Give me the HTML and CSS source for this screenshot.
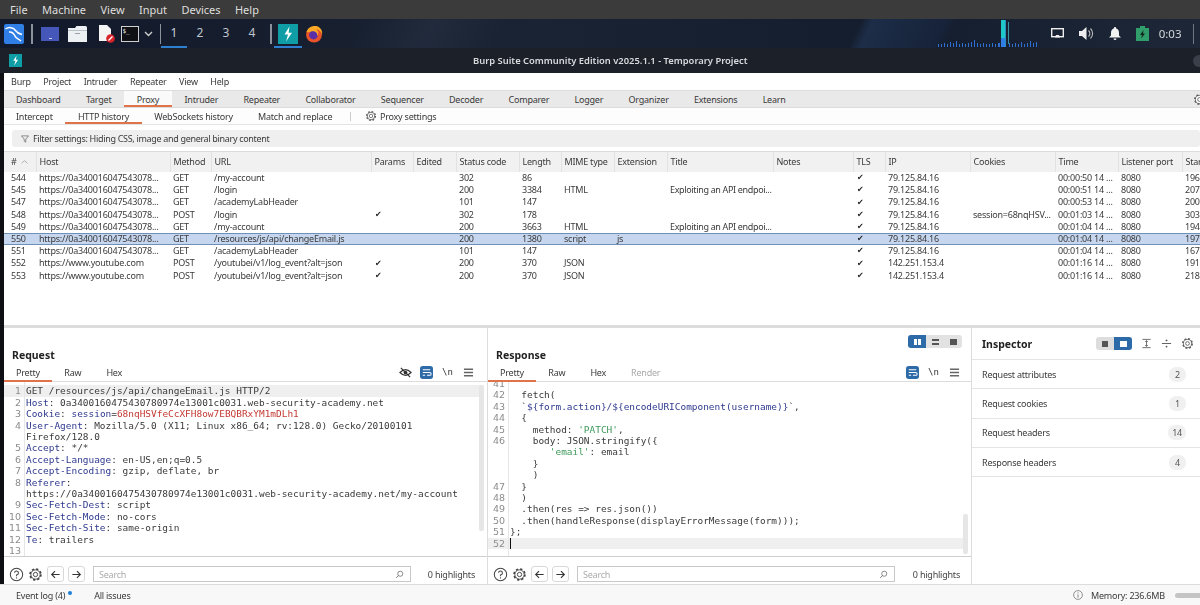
FILE: index.html
```html
<!DOCTYPE html>
<html lang="en">
<head>
<meta charset="utf-8">
<title>Burp Suite Community Edition</title>
<link rel="stylesheet" href="styles.css">
</head>
<body>
<svg class="defs" width="0" height="0" aria-hidden="true">
  <symbol id="gear" viewBox="0 0 16 16">
    <circle cx="8" cy="8" r="5.4" fill="none" stroke="currentColor" stroke-width="2.6" stroke-dasharray="2.2 2.04"/>
    <circle cx="8" cy="8" r="5" fill="#fff" stroke="currentColor" stroke-width="1"/>
    <circle cx="8" cy="8" r="2.3" fill="none" stroke="currentColor" stroke-width="1"/>
  </symbol>
  <symbol id="burp" viewBox="0 0 20 20">
    <rect width="20" height="20" fill="#0f9ea6"/>
    <path d="M11.5 2.5 6.5 10.5H10L8 17.5 14 8.8H10.6Z" fill="#fff"/>
  </symbol>
  <symbol id="wrap" viewBox="0 0 14 14">
    <rect width="14" height="14" rx="3" fill="#2d6aa8"/>
    <path d="M3 4H11M3 7H10.5A1.5 1.5 0 0 1 10.5 10H7.5M3 10H5.5" fill="none" stroke="#fff" stroke-width="1.1"/>
  </symbol>
  <symbol id="menu" viewBox="0 0 10 10">
    <path d="M1.5 2.5H8.5M1.5 5H8.5M1.5 7.5H8.5" stroke="#666" stroke-width="1.2"/>
  </symbol>
  <symbol id="help" viewBox="0 0 16 16">
    <circle cx="8" cy="8" r="6.6" fill="none" stroke="#444" stroke-width="1.1"/>
    <path d="M5.9 6.2A2.1 2.1 0 1 1 8 8.5V9.8" fill="none" stroke="#444" stroke-width="1.1"/>
    <circle cx="8" cy="11.6" r=".7" fill="#444"/>
  </symbol>
  <symbol id="left" viewBox="0 0 12 12">
    <path d="M10.5 6H1.8M5.5 2.2 1.8 6 5.5 9.8" fill="none" stroke="#333" stroke-width="1.2"/>
  </symbol>
  <symbol id="right" viewBox="0 0 12 12">
    <path d="M1.5 6H10.2M6.5 2.2 10.2 6 6.5 9.8" fill="none" stroke="#333" stroke-width="1.2"/>
  </symbol>
  <symbol id="lens" viewBox="0 0 12 12">
    <circle cx="7" cy="5" r="3.4" fill="none" stroke="#666" stroke-width="1"/>
    <path d="M4.6 7.4 1.6 10.6" stroke="#666" stroke-width="1.1"/>
  </symbol>
</svg>

<div class="vmmenu">
  <span>File</span><span>Machine</span><span>View</span><span>Input</span><span>Devices</span><span>Help</span>
</div>

<div class="taskbar">
  <svg class="tb-kali" viewBox="0 0 20 20"><rect width="20" height="20" rx="2" fill="#2f7fe6"/><path d="M1.5 5C5 2.5 9.5 3.5 11.5 6.5 13.5 9.5 15.5 10 18 10.5M5 8C8.5 7.5 10 10 11 12 12 14.5 14.5 14.5 17 17" fill="none" stroke="#fff" stroke-width="1.5"/></svg>
  <i class="tb-sep sep-a"></i>
  <svg class="tb-desk" viewBox="0 0 18 14"><rect width="18" height="14" fill="#4557b8"/><rect x="8" y="11" width="3" height="1" fill="#c5cdf0"/></svg>
  <svg class="tb-folder" viewBox="0 0 19 16"><path d="M0 2H7L8.5 0H17.5Q19 0 19 1.5V16H0Z" fill="#eef1f4"/><rect x="0" y="4" width="19" height="1" fill="#b9c1c9"/><rect x="7" y="7" width="5" height="1" fill="#9aa3ac"/></svg>
  <svg class="tb-doc" viewBox="0 0 17 18"><path d="M1 0H9L13 4V16H1Z" fill="#f4f4f4"/><circle cx="12.5" cy="13.5" r="4.3" fill="#d8232a"/><path d="M10.5 15.5 14.5 11.5" stroke="#fff" stroke-width="1.2"/></svg>
  <div class="tb-term"><span>$_</span></div>
  <svg class="tb-chev" viewBox="0 0 9 6"><path d="M1 1 4.5 4.5 8 1" fill="none" stroke="#ccc" stroke-width="1.4"/></svg>
  <i class="tb-sep sep-b"></i>
  <div class="ws ws-on">1</div><div class="ws">2</div><div class="ws">3</div><div class="ws">4</div>
  <i class="tb-sep sep-c"></i>
  <div class="tb-burp"><svg viewBox="0 0 20 20"><use href="#burp"/></svg></div>
  <svg class="tb-fox" viewBox="0 0 18 18"><circle cx="9" cy="9.5" r="8" fill="#e8532a"/><circle cx="8.5" cy="10" r="4.4" fill="#5a2ea6"/><path d="M1.5 7C3 2.5 7 .5 11 1 15 1.5 18 5.5 17 10 16.5 6.5 14 4.5 11 4.5 14 6 14 9 12 11 13 7 9 5.5 6 6.5 4.5 7 3 7.5 1.5 7Z" fill="#f9a825"/></svg>
  <svg class="tb-spec" viewBox="0 0 114 29">
    <g fill="#2f6fd0">
      <rect x="1" y="25" width="1" height="3"/><rect x="4" y="25" width="1" height="3"/><rect x="7" y="24" width="1" height="4"/><rect x="10" y="25" width="1" height="3"/><rect x="13" y="23" width="1" height="5"/><rect x="16" y="24" width="1" height="4"/><rect x="19" y="22" width="1" height="6"/><rect x="22" y="25" width="1" height="3"/><rect x="25" y="24" width="1" height="4"/><rect x="28" y="25" width="1" height="3"/><rect x="31" y="24" width="1" height="4"/><rect x="34" y="23" width="1" height="5"/><rect x="37" y="21" width="1" height="7"/><rect x="40" y="24" width="1" height="4"/><rect x="43" y="25" width="1" height="3"/><rect x="46" y="24" width="1" height="4"/><rect x="49" y="25" width="1" height="3"/><rect x="52" y="25" width="1" height="3"/><rect x="55" y="24" width="1" height="4"/><rect x="58" y="25" width="1" height="3"/><rect x="61" y="24" width="2" height="4"/><rect x="72" y="24" width="1" height="4"/><rect x="75" y="25" width="1" height="3"/><rect x="78" y="24" width="1" height="4"/><rect x="81" y="25" width="1" height="3"/><rect x="84" y="23" width="1" height="5"/><rect x="87" y="25" width="1" height="3"/><rect x="90" y="24" width="1" height="4"/><rect x="93" y="22" width="1" height="6"/><rect x="96" y="24" width="1" height="4"/><rect x="99" y="23" width="1" height="5"/>
    </g>
    <rect x="64" y="1" width="4" height="18" fill="#1fc8c8"/><rect x="64" y="19" width="4" height="9" fill="#2f7fe6"/><rect x="68" y="1" width="1" height="27" fill="#2a8fc0"/><rect x="71" y="3" width="1" height="22" fill="#3a90a0"/>
  </svg>
  <svg class="tb-disp" viewBox="0 0 13 11"><rect x=".7" y=".7" width="11.6" height="8" fill="none" stroke="#eee" stroke-width="1.4"/><path d="M4 9.5H9L8 7H5Z" fill="#eee"/></svg>
  <svg class="tb-vol" viewBox="0 0 15 13"><path d="M0 4H3L7.5 0V13L3 9H0Z" fill="#eee"/><path d="M9.5 3.5A4 4 0 0 1 9.5 9.5M11.5 1.5A7 7 0 0 1 11.5 11.5" fill="none" stroke="#bbb" stroke-width="1.1"/></svg>
  <svg class="tb-bell" viewBox="0 0 12 13"><path d="M6 0A1 1 0 0 1 7 1.2C9 1.8 10 3.5 10 6V8.5L12 10.5H0L2 8.5V6C2 3.5 3 1.8 5 1.2A1 1 0 0 1 6 0Z" fill="#f2f2f2"/><path d="M4.5 11.5H7.5A1.5 1.5 0 0 1 4.5 11.5Z" fill="#f2f2f2"/></svg>
  <svg class="tb-batt" viewBox="0 0 13 15"><rect x="4" y="0" width="5" height="2" fill="#2f9e6a"/><rect y="2" width="13" height="13" fill="#2f9e6a"/><path d="M7.5 4 4 9H6L5.2 12.5 9 7.5H7Z" fill="#13261d"/></svg>
  <span class="tb-clock">0:03</span>
  <i class="tb-sep sep-d"></i>
</div>

<div class="titlebar">
  <svg class="tt-icon" viewBox="0 0 20 20"><use href="#burp"/></svg>
  <span class="tt-text">Burp Suite Community Edition v2025.1.1 - Temporary Project</span>
  <i class="tt-dot"></i>
</div>

<div class="frame">
  <main class="app">
    <nav class="menubar"><span>Burp</span><span>Project</span><span>Intruder</span><span>Repeater</span><span>View</span><span>Help</span></nav>

    <nav class="tabs">
      <span>Dashboard</span><span>Target</span><span class="on">Proxy</span><span>Intruder</span><span>Repeater</span><span>Collaborator</span><span>Sequencer</span><span>Decoder</span><span>Comparer</span><span>Logger</span><span>Organizer</span><span>Extensions</span><span>Learn</span>
      <svg class="tabs-gear" viewBox="0 0 16 16"><use href="#gear"/></svg>
    </nav>

    <nav class="subtabs">
      <span>Intercept</span><span class="on">HTTP history</span><span>WebSockets history</span><span>Match and replace</span>
      <i class="sub-sep"></i>
      <svg class="sub-gear" viewBox="0 0 16 16"><use href="#gear"/></svg>
      <span class="sub-set">Proxy settings</span>
    </nav>

    <div class="filter">
      <svg viewBox="0 0 9 9"><path d="M.5 1H8.5L5.4 4.6V8L3.6 7V4.6Z" fill="none" stroke="#666" stroke-width=".8"/></svg>
      <span>Filter settings: Hiding CSS, image and general binary content</span>
    </div>

    <div class="tablewrap">
      <table class="history">
        <colgroup>
          <col class="c-num"><col class="c-host"><col class="c-meth"><col class="c-url"><col class="c-par"><col class="c-edit"><col class="c-stat"><col class="c-len"><col class="c-mime"><col class="c-ext"><col class="c-title"><col class="c-notes"><col class="c-tls"><col class="c-ip"><col class="c-cook"><col class="c-time"><col class="c-port"><col class="c-start">
        </colgroup>
        <thead>
          <tr><th># <svg class="sort" viewBox="0 0 8 4"><path d="M.5 3.5 4 .5 7.5 3.5" fill="none" stroke="#999" stroke-width=".8"/></svg></th><th>Host</th><th>Method</th><th>URL</th><th>Params</th><th>Edited</th><th>Status code</th><th>Length</th><th>MIME type</th><th>Extension</th><th>Title</th><th>Notes</th><th>TLS</th><th>IP</th><th>Cookies</th><th>Time</th><th>Listener port</th><th>Start</th></tr>
        </thead>
        <tbody>
          <tr><td>544</td><td>https://0a340016047543078...</td><td>GET</td><td>/my-account</td><td></td><td></td><td>302</td><td>86</td><td></td><td></td><td></td><td></td><td class="chk">✔</td><td>79.125.84.16</td><td></td><td>00:00:50 14 ...</td><td>8080</td><td>196</td></tr>
          <tr><td>545</td><td>https://0a340016047543078...</td><td>GET</td><td>/login</td><td></td><td></td><td>200</td><td>3384</td><td>HTML</td><td></td><td class="pagetitle">Exploiting an API endpoi...</td><td></td><td class="chk">✔</td><td>79.125.84.16</td><td></td><td>00:00:51 14 ...</td><td>8080</td><td>207</td></tr>
          <tr><td>547</td><td>https://0a340016047543078...</td><td>GET</td><td>/academyLabHeader</td><td></td><td></td><td>101</td><td>147</td><td></td><td></td><td></td><td></td><td class="chk">✔</td><td>79.125.84.16</td><td></td><td>00:00:53 14 ...</td><td>8080</td><td>200</td></tr>
          <tr><td>548</td><td>https://0a340016047543078...</td><td>POST</td><td>/login</td><td class="chk">✔</td><td></td><td>302</td><td>178</td><td></td><td></td><td></td><td></td><td class="chk">✔</td><td>79.125.84.16</td><td>session=68nqHSV...</td><td>00:01:03 14 ...</td><td>8080</td><td>303</td></tr>
          <tr><td>549</td><td>https://0a340016047543078...</td><td>GET</td><td>/my-account</td><td></td><td></td><td>200</td><td>3663</td><td>HTML</td><td></td><td class="pagetitle">Exploiting an API endpoi...</td><td></td><td class="chk">✔</td><td>79.125.84.16</td><td></td><td>00:01:04 14 ...</td><td>8080</td><td>194</td></tr>
          <tr class="sel"><td>550</td><td>https://0a340016047543078...</td><td>GET</td><td>/resources/js/api/changeEmail.js</td><td></td><td></td><td>200</td><td>1380</td><td>script</td><td>js</td><td></td><td></td><td class="chk">✔</td><td>79.125.84.16</td><td></td><td>00:01:04 14 ...</td><td>8080</td><td>197</td></tr>
          <tr><td>551</td><td>https://0a340016047543078...</td><td>GET</td><td>/academyLabHeader</td><td></td><td></td><td>101</td><td>147</td><td></td><td></td><td></td><td></td><td class="chk">✔</td><td>79.125.84.16</td><td></td><td>00:01:04 14 ...</td><td>8080</td><td>167</td></tr>
          <tr><td>552</td><td>https://www.youtube.com</td><td>POST</td><td>/youtubei/v1/log_event?alt=json</td><td class="chk">✔</td><td></td><td>200</td><td>370</td><td>JSON</td><td></td><td></td><td></td><td class="chk">✔</td><td>142.251.153.4</td><td></td><td>00:01:16 14 ...</td><td>8080</td><td>191</td></tr>
          <tr><td>553</td><td>https://www.youtube.com</td><td>POST</td><td>/youtubei/v1/log_event?alt=json</td><td class="chk">✔</td><td></td><td>200</td><td>370</td><td>JSON</td><td></td><td></td><td></td><td class="chk">✔</td><td>142.251.153.4</td><td></td><td>00:01:16 14 ...</td><td>8080</td><td>218</td></tr>
        </tbody>
      </table>
    </div>

    <div class="workspace">
      <section class="panel">
        <div class="panel-head">
          <h2>Request</h2>
          <div class="panel-tabs">
            <span class="on">Pretty</span><span>Raw</span><span>Hex</span>
            <div class="tools">
              <svg class="tool" viewBox="0 0 14 14"><path d="M1 7Q7 1 13 7 7 13 1 7Z" fill="none" stroke="#333" stroke-width="1.2"/><circle cx="7" cy="7" r="2" fill="#333"/><path d="M2 2 12 12" stroke="#333" stroke-width="1.3"/></svg>
              <svg class="tool" viewBox="0 0 14 14"><use href="#wrap"/></svg>
              <span class="nl">\n</span>
              <svg class="tool" viewBox="0 0 10 10"><use href="#menu"/></svg>
            </div>
          </div>
        </div>
        <div class="editor">
          <div class="code">
            <div class="ln cur"><b>1</b><code>GET /resources/js/api/changeEmail.js HTTP/2</code></div>
            <div class="ln"><b>2</b><code><em>Host</em>: 0a340016047543078​0974e13001c0031.web-security-academy.net</code></div>
            <div class="ln"><b>3</b><code><em>Cookie</em>: <em>session</em>=<u>68nqHSVfeCcXFH8ow7EBQBRxYM1mDLh1</u></code></div>
            <div class="ln"><b>4</b><code><em>User-Agent</em>: Mozilla/5.0 (X11; Linux x86_64; rv:128.0) Gecko/20100101</code></div>
            <div class="ln"><b></b><code>Firefox/128.0</code></div>
            <div class="ln"><b>5</b><code><em>Accept</em>: */*</code></div>
            <div class="ln"><b>6</b><code><em>Accept-Language</em>: en-US,en;q=0.5</code></div>
            <div class="ln"><b>7</b><code><em>Accept-Encoding</em>: gzip, deflate, br</code></div>
            <div class="ln"><b>8</b><code><em>Referer</em>:</code></div>
            <div class="ln"><b></b><code>https://0a340016047543078​0974e13001c0031.web-security-academy.net/my-account</code></div>
            <div class="ln"><b>9</b><code><em>Sec-Fetch-Dest</em>: script</code></div>
            <div class="ln"><b>10</b><code><em>Sec-Fetch-Mode</em>: no-cors</code></div>
            <div class="ln"><b>11</b><code><em>Sec-Fetch-Site</em>: same-origin</code></div>
            <div class="ln"><b>12</b><code><em>Te</em>: trailers</code></div>
            <div class="ln"><b>13</b><code></code></div>
          </div>
          <i class="thumb thumb-req"></i>
        </div>
        <div class="searchbar">
          <svg class="sb-i" viewBox="0 0 16 16"><use href="#help"/></svg>
          <svg class="sb-i" viewBox="0 0 16 16"><use href="#gear"/></svg>
          <div class="sb-btn"><svg viewBox="0 0 12 12"><use href="#left"/></svg></div>
          <div class="sb-btn"><svg viewBox="0 0 12 12"><use href="#right"/></svg></div>
          <div class="sb-box"><span>Search</span><svg viewBox="0 0 12 12"><use href="#lens"/></svg></div>
          <span class="sb-count">0 highlights</span>
        </div>
      </section>

      <section class="panel panel-resp">
        <div class="panel-head">
          <div class="layout-toggle">
            <span class="on"><i class="g-two"></i></span><span><i class="g-rows"></i></span><span><i class="g-one"></i></span>
          </div>
          <h2>Response</h2>
          <div class="panel-tabs">
            <span class="on">Pretty</span><span>Raw</span><span>Hex</span><span class="off">Render</span>
            <div class="tools">
              <svg class="tool" viewBox="0 0 14 14"><use href="#wrap"/></svg>
              <span class="nl">\n</span>
              <svg class="tool" viewBox="0 0 10 10"><use href="#menu"/></svg>
            </div>
          </div>
        </div>
        <div class="editor">
          <div class="code scrolled">
            <div class="ln"><b>41</b><code></code></div>
            <div class="ln"><b>42</b><code>  fetch(</code></div>
            <div class="ln"><b>43</b><code>  `<s>${form.action}/${encodeURIComponent(username)}</s>`,</code></div>
            <div class="ln"><b>44</b><code>  {</code></div>
            <div class="ln"><b>45</b><code>    method: <q>'PATCH'</q>,</code></div>
            <div class="ln"><b>46</b><code>    body: JSON.stringify({</code></div>
            <div class="ln"><b></b><code>       <q>'email'</q>: email</code></div>
            <div class="ln"><b></b><code>    }</code></div>
            <div class="ln"><b></b><code>    )</code></div>
            <div class="ln"><b>47</b><code>  }</code></div>
            <div class="ln"><b>48</b><code>  )</code></div>
            <div class="ln"><b>49</b><code>  .then(res =&gt; res.json())</code></div>
            <div class="ln"><b>50</b><code>  .then(handleResponse(displayErrorMessage(form)));</code></div>
            <div class="ln"><b>51</b><code>};</code></div>
            <div class="ln cur caret"><b>52</b><code></code></div>
          </div>
          <i class="thumb thumb-resp"></i>
        </div>
        <div class="searchbar">
          <svg class="sb-i" viewBox="0 0 16 16"><use href="#help"/></svg>
          <svg class="sb-i" viewBox="0 0 16 16"><use href="#gear"/></svg>
          <div class="sb-btn"><svg viewBox="0 0 12 12"><use href="#left"/></svg></div>
          <div class="sb-btn"><svg viewBox="0 0 12 12"><use href="#right"/></svg></div>
          <div class="sb-box"><span>Search</span><svg viewBox="0 0 12 12"><use href="#lens"/></svg></div>
          <span class="sb-count">0 highlights</span>
        </div>
      </section>

      <aside class="inspector">
        <div class="insp-head">
          <h2>Inspector</h2>
          <div class="insp-toggle"><span><i></i></span><span class="on"><i></i></span></div>
          <svg class="insp-i" viewBox="0 0 12 12"><path d="M1.5 1.5H10.5M1.5 10.5H10.5M6 3V9M4.5 4.2 6 2.8 7.5 4.2M4.5 7.8 6 9.2 7.5 7.8" fill="none" stroke="#555" stroke-width=".9"/></svg>
          <svg class="insp-i" viewBox="0 0 12 12"><path d="M1 6H11" stroke="#555" stroke-width="1"/><circle cx="6" cy="2.6" r="1" fill="#555"/><circle cx="6" cy="9.4" r="1" fill="#555"/></svg>
          <svg class="insp-i insp-gear" viewBox="0 0 16 16"><use href="#gear"/></svg>
        </div>
        <div class="insp-row"><span>Request attributes</span><em>2</em></div>
        <div class="insp-row"><span>Request cookies</span><em>1</em></div>
        <div class="insp-row"><span>Request headers</span><em>14</em></div>
        <div class="insp-row"><span>Response headers</span><em>4</em></div>
      </aside>
    </div>
  </main>
</div>

<footer class="status">
  <span class="ev">Event log (4)<i></i></span>
  <span>All issues</span>
  <div class="mem">
    <svg viewBox="0 0 10 10"><circle cx="5" cy="5" r="4.4" fill="none" stroke="#777" stroke-width=".8"/><path d="M5 4.4V7.6M5 2.4V3.4" stroke="#777" stroke-width=".9"/></svg>
    <span>Memory: 236.6MB</span>
    <i></i>
  </div>
</footer>
</body>
</html>
```

FILE: styles.css
```css
* { box-sizing: border-box; }
html, body { margin: 0; height: 605px; overflow: hidden; }
body {
  width: 1200px;
  display: flex;
  flex-direction: column;
  background: #0d0f14;
  font-family: "Noto Sans", "Liberation Sans", sans-serif;
  font-size: 9px;
  letter-spacing: -0.22px;
  color: #3a3a3a;
  filter: blur(0.35px);
}
.defs { position: absolute; }
h2 { margin: 0; font-size: 10.5px; font-weight: 700; color: #222; letter-spacing: 0; }

.vmmenu {
  height: 19px;
  flex: none;
  display: flex;
  gap: 14.4px;
  padding-left: 10px;
  align-items: center;
  background: #3b3b3b;
  color: #dedede;
  font-size: 11px;
  letter-spacing: 0;
}

.taskbar {
  height: 29px;
  flex: none;
  display: flex;
  align-items: center;
  padding-left: 4px;
  background:
    linear-gradient(115deg, transparent 71%, rgba(45,75,120,.35) 72%, rgba(25,45,80,.3) 78%, transparent 79%),
    linear-gradient(115deg, transparent 30%, rgba(50,60,80,.35) 36%, transparent 42%),
    linear-gradient(90deg, #12192a, #1a2333 45%, #141d2e 75%, #1d2738);
  color: #ddd;
  letter-spacing: 0;
}
.tb-kali { width: 20px; height: 20px; }
.tb-sep { width: 1.5px; height: 20px; background: #8b929b; flex: none; }
.sep-a { margin-left: 7px; }
.tb-desk { width: 18px; height: 14px; margin-left: 8px; }
.tb-folder { width: 19px; height: 16px; margin-left: 9px; }
.tb-doc { width: 17px; height: 18px; margin-left: 11px; }
.tb-term {
  width: 18px; height: 16px; margin-left: 6px;
  background: #101114; border: 1px solid #cfcfcf;
  font: 6px/8px "DejaVu Sans Mono", monospace; color: #eee; padding-left: 1px;
}
.tb-chev { width: 9px; height: 6px; margin-left: 5px; }
.sep-b { margin-left: 7px; }
.ws {
  width: 26px; height: 29px; line-height: 28px;
  text-align: center; font-size: 12px; color: #bfc4cc;
}
.ws-on { color: #c9ced6; box-shadow: inset 0 -2px 0 #2f7fd0; }
.sep-c { margin-left: 5px; }
.tb-burp {
  width: 28px; height: 29px; margin-left: 2px;
  display: flex; justify-content: center; align-items: center;
  box-shadow: inset 0 -2px 0 #2f7fd0;
}
.tb-burp svg { width: 20px; height: 20px; }
.tb-fox { width: 18px; height: 18px; margin-left: 3px; }
.tb-spec { width: 114px; height: 29px; margin-left: auto; }
.tb-disp { width: 13px; height: 11px; margin-left: 0; }
.tb-vol { width: 15px; height: 13px; margin-left: 15px; }
.tb-bell { width: 12px; height: 13px; margin-left: 15px; }
.tb-batt { width: 13px; height: 15px; margin-left: 15px; }
.tb-clock { font-size: 11.5px; margin-left: 10px; color: #d5d8dc; }
.sep-d { margin-left: 11px; margin-right: 6px; background: #6f7680; }

.titlebar {
  height: 25px;
  flex: none;
  display: flex;
  align-items: center;
  position: relative;
  padding-left: 9px;
  background: #1c2028;
}
.tt-icon { width: 13px; height: 13px; }
.tt-text {
  position: absolute;
  left: 473px;
  font-size: 9.4px;
  font-weight: 600;
  letter-spacing: 0;
  color: #d8dade;
  white-space: nowrap;
}
.tt-dot {
  position: absolute;
  right: -5px;
  width: 12px; height: 12px;
  border-radius: 50%;
  background: #3a3f4a;
}

.frame { flex: 1; min-height: 0; padding-left: 4px; display: flex; }
.app {
  flex: 1;
  min-width: 0;
  background: #fff;
  display: flex;
  flex-direction: column;
}

.menubar {
  height: 17px;
  flex: none;
  display: flex;
  align-items: center;
  gap: 12.5px;
  padding-left: 7px;
}

.tabs {
  height: 18px;
  flex: none;
  display: flex;
  align-items: stretch;
  position: relative;
  background: #e9e9e9;
  border-top: 1px solid #dcdcdc;
  border-bottom: 1px solid #dcdcdc;
}
.tabs span {
  padding: 0 12.65px;
  display: flex;
  align-items: center;
}
.tabs span:first-child { padding-left: 12px; }
.tabs .on { background: #fafafa; box-shadow: inset 0 -2px 0 #e0734a; }
.tabs-gear { position: absolute; right: -6px; top: 2px; width: 13px; height: 13px; color: #555; }

.subtabs {
  height: 17px;
  flex: none;
  display: flex;
  align-items: stretch;
  border-bottom: 1px solid #e4e4e4;
  background: #fdfdfd;
}
.subtabs > span {
  padding: 0 12.6px;
  display: flex;
  align-items: center;
}
.subtabs > span:first-child { padding-left: 12px; }
.subtabs .on { box-shadow: inset 0 -2px 0 #e0734a; }
.sub-sep { width: 1px; height: 9px; background: #ccc; align-self: center; margin-left: 5px; }
.sub-gear { width: 12px; height: 12px; align-self: center; margin-left: 14px; color: #555; }
.subtabs > span.sub-set { padding: 0 0 0 3px; }

.filter {
  height: 17px;
  flex: none;
  margin: 5px 0 0 8px;
  display: flex;
  align-items: center;
  gap: 4px;
  padding-left: 9px;
  background: #efefef;
  border-radius: 3px;
  letter-spacing: -0.32px;
}
.filter svg { width: 8px; height: 8px; }

.tablewrap {
  height: 177px;
  flex: none;
  margin-top: 4px;
  overflow: hidden;
  border-top: 1px solid #dcdcdc;
  border-bottom: 3px solid #dcdcdc;
}
.history {
  width: 1230px;
  table-layout: fixed;
  border-collapse: collapse;
  border-spacing: 0;
}
.c-num { width: 32px; } .c-host { width: 134px; } .c-meth { width: 41px; } .c-url { width: 160px; }
.c-par { width: 42px; } .c-edit { width: 43px; } .c-stat { width: 63px; } .c-len { width: 42px; }
.c-mime { width: 53px; } .c-ext { width: 53px; } .c-title { width: 106px; } .c-notes { width: 80px; }
.c-tls { width: 32px; } .c-ip { width: 85px; } .c-cook { width: 85px; } .c-time { width: 63px; }
.c-port { width: 64px; } .c-start { width: 52px; }
.history th {
  height: 20px;
  padding: 0 3px 2px;
  background: #f1f1f1;
  border-left: 1px solid #e2e2e2;
  font-weight: 400;
  text-align: left;
  white-space: nowrap;
  overflow: hidden;
}
.history th:first-child { border-left: 0; padding-left: 7px; }
.sort { width: 7px; height: 4px; vertical-align: 1px; margin-left: 2px; }
.history tbody tr { height: 12.2px; }
.history td {
  height: 12.2px;
  padding: 0 0 0 3px;
  font-size: 9px;
  line-height: 12.2px;
  white-space: nowrap;
  overflow: hidden;
}
.history td:first-child { padding-left: 7px; }
.history .pagetitle { letter-spacing: -0.34px; }
.history .chk { padding-left: 4px; font-size: 8px; line-height: 12px; color: #222; font-family: "DejaVu Sans", sans-serif; }
.history .sel td {
  background: #c6d6ee;
  box-shadow: inset 0 1px 0 #6d8fb8, inset 0 -1px 0 #6d8fb8;
}

.workspace {
  flex: 1;
  min-height: 0;
  display: grid;
  grid-template-columns: 483px 485px 1fr;
}
.panel {
  display: flex;
  flex-direction: column;
  min-width: 0;
  border-bottom: 1px solid #dcdcdc;
}
.panel-resp { border-left: 1px solid #dcdcdc; border-right: 1px solid #dcdcdc; }
.panel-head { height: 54px; flex: none; position: relative; display: flex; flex-direction: column; justify-content: flex-end; }
.panel-head h2 { padding-left: 8px; margin-bottom: 2px; line-height: 14px; }
.panel-tabs {
  height: 18px;
  flex: none;
  display: flex;
  align-items: center;
  border-bottom: 1px solid #dcdcdc;
}
.panel-tabs > span {
  height: 18px;
  padding: 0 12.5px;
  display: flex;
  align-items: center;
}
.panel-tabs > span:first-child { padding: 0 12px; }
.panel-tabs > .on { box-shadow: inset 0 -2px 0 #e0734a; }
.panel-tabs > .off { color: #aaa; }
.tools { margin-left: auto; display: flex; align-items: center; gap: 8px; padding-right: 12px; padding-bottom: 1px; }
.panel-resp .tools { padding-right: 10px; }
.tool { width: 13px; height: 13px; }
.nl { width: 13px; text-align: center; font: 9px "DejaVu Sans Mono", monospace; color: #333; letter-spacing: 0; }

.layout-toggle {
  position: absolute;
  top: 7px;
  right: 9px;
  display: flex;
  height: 13px;
  width: 54px;
  background: #e2e2e2;
  border-radius: 3px;
  overflow: hidden;
}
.layout-toggle span { flex: 1; display: flex; align-items: center; justify-content: center; }
.layout-toggle .on { background: #2d6aa8; }
.layout-toggle i { display: block; }
.g-two { width: 7px; height: 6px; border-left: 3px solid #fff; border-right: 3px solid #fff; }
.g-rows { width: 7px; height: 6px; border-top: 2px solid #555; border-bottom: 2px solid #555; }
.g-one { width: 7px; height: 6px; background: #555; }

.editor { flex: 1; min-height: 0; position: relative; overflow: hidden; border-bottom: 1px solid #cfcfcf; }
.code { padding-top: 3.4px; font: 9.45px/11.42px "DejaVu Sans Mono", monospace; color: #3a3a3a; letter-spacing: 0; }
.scrolled { margin-top: -4px; padding-top: 0; }
.ln { display: flex; height: 11.42px; margin-right: 7px; }
.ln b {
  width: 17px;
  flex: none;
  text-align: right;
  font: 400 9.5px/11.42px "DejaVu Sans", sans-serif;
  color: #8c8c8c;
}
.ln code { font: inherit; white-space: pre; margin-left: 5px; flex: 1; }
.cur { background: #efefef; }
.caret code { box-shadow: inset 1px 0 0 #111; }
.ln em { font-style: normal; color: #2f3a8f; }
.ln u { text-decoration: none; color: #c43a34; }
.ln s { text-decoration: none; color: #2f3a8f; }
.ln q { quotes: none; color: #3f9a5b; }
.editor::before {
  content: "";
  position: absolute;
  left: 20px; top: 0; bottom: 0;
  width: 1px;
  background: #e6e6e6;
}
.thumb { position: absolute; right: 3px; width: 5px; background: #e6e6e6; border-radius: 2px; }
.thumb-req { top: 3px; height: 146px; }
.thumb-resp { bottom: 2px; height: 40px; }

.searchbar {
  height: 34px;
  flex: none;
  display: flex;
  align-items: center;
  padding: 0 12px 0 5px;
}
.panel-resp .searchbar { padding-right: 11px; }
.sb-i { width: 15px; height: 15px; margin-right: 4px; color: #444; }
.sb-btn {
  width: 17px; height: 16px; margin-right: 4px;
  border: 1px solid #d8d8d8;
  border-radius: 3px;
  display: flex; align-items: center; justify-content: center;
}
.sb-btn svg { width: 11px; height: 11px; }
.sb-box {
  margin-left: 4px;
  width: 318px; height: 16px;
  border: 1px solid #c8c8c8;
  display: flex; align-items: center; justify-content: space-between;
  padding: 0 6px 0 5px;
  color: #aaa;
}
.sb-box svg { width: 9px; height: 9px; }
.sb-count { margin-left: auto; color: #444; }

.inspector { display: flex; flex-direction: column; }
.insp-head { height: 32px; display: flex; align-items: center; padding-left: 10px; border-bottom: 1px solid #e4e4e4; }
.insp-toggle { margin-left: auto; display: flex; width: 36px; height: 13px; border-radius: 3px; overflow: hidden; background: #ddd; }
.insp-toggle span { flex: 1; display: flex; align-items: center; justify-content: center; }
.insp-toggle i { display: block; width: 6px; height: 6px; background: #555; }
.insp-toggle .on { background: #2d6aa8; }
.insp-toggle .on i { background: #fff; width: 7px; }
.insp-i { width: 11px; height: 11px; margin-left: 9px; }
.insp-gear { width: 13px; height: 13px; color: #555; margin-right: 6px; }
.insp-row {
  height: 29.3px;
  flex: none;
  display: flex;
  align-items: center;
  justify-content: space-between;
  padding: 0 14px 0 10px;
  border-bottom: 1px solid #e4e4e4;
}
.insp-row em {
  font-style: normal;
  min-width: 17px;
  text-align: center;
  padding: 1px 4px;
  border-radius: 7px;
  background: #f0f0f0;
  color: #555;
}

.status {
  height: 21px;
  flex: none;
  display: flex;
  align-items: center;
  gap: 22px;
  padding-left: 16px;
  background: #f8f8f8;
  border-top: 1px solid #dcdcdc;
}
.ev i {
  display: inline-block;
  width: 4px; height: 4px;
  margin-left: 3px;
  border-radius: 50%;
  background: #1f7fd6;
  vertical-align: 4px;
}
.mem { margin-left: auto; display: flex; align-items: center; }
.mem svg { width: 10px; height: 10px; margin-right: 8px; }
.mem span { width: 84px; }
.mem i { width: 25px; height: 5px; border-radius: 2.5px 0 0 2.5px; background: #c4c4c4; }
```
